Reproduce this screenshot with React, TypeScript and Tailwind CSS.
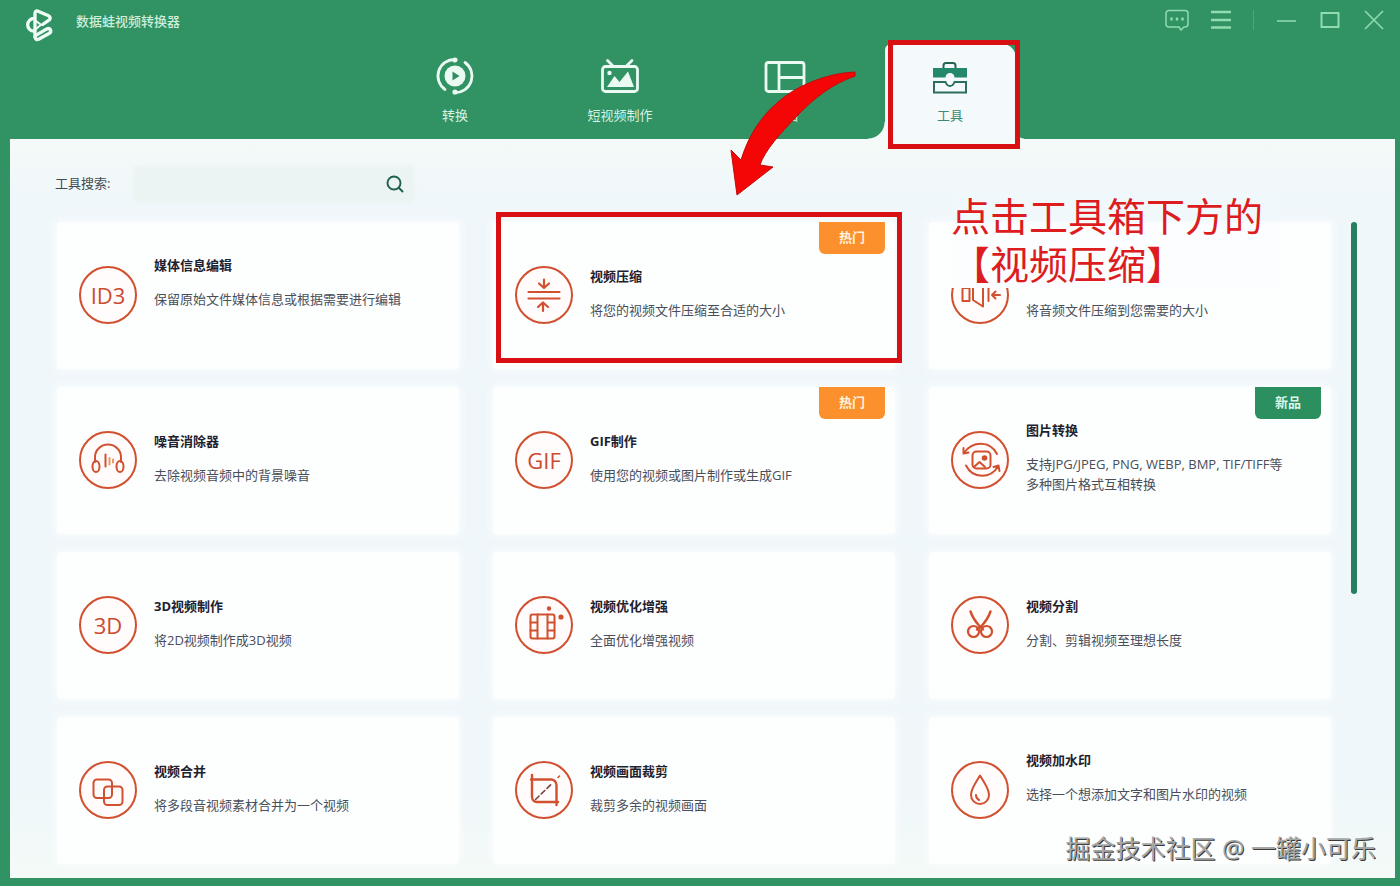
import type { ReactNode } from "react";

type Badge = "hot" | "new";

interface Tool {
  title: string;
  desc: string;
  icon: ReactNode;
  badge?: Badge;
  tall?: boolean;
  marked?: boolean;
  note?: boolean;
}

function Ring({ children }: { children: ReactNode }) {
  return (
    <svg
      viewBox="0 0 58 58"
      className="size-[58px] shrink-0"
      fill="none"
      stroke="#d1502f"
      strokeWidth="2"
      strokeLinecap="round"
      strokeLinejoin="round"
      aria-hidden="true"
    >
      <circle cx="29" cy="29" r="28" fill="#fffcfb" />
      {children}
    </svg>
  );
}

function RingText({ children }: { children: string }) {
  return (
    <span className="flex size-[58px] shrink-0 items-center justify-center rounded-full border-2 border-[#d1502f] bg-[#fffcfb] text-[22px] leading-7 font-medium text-[#cb4a30]">
      {children}
    </span>
  );
}

const tools: Tool[] = [
  {
    title: "媒体信息编辑",
    desc: "保留原始文件媒体信息或根据需要进行编辑",
    tall: true,
    icon: <RingText>ID3</RingText>,
  },
  {
    title: "视频压缩",
    desc: "将您的视频文件压缩至合适的大小",
    badge: "hot",
    marked: true,
    icon: (
      <Ring>
        <path d="M13.500 26h31M13.500 32.500h31" strokeWidth="2.200" />
        <path d="M29 13.500v8M24 17.500l5 4.500 5-4.500M28 45v-8M23 41l5-4.500 5 4.500" strokeWidth="2.200" />
      </Ring>
    ),
  },
  {
    title: "",
    desc: "将音频文件压缩到您需要的大小",
    note: true,
    icon: (
      <Ring>
        <path d="M11.500 22h7v13h-7zM22 22v12l10 6.500V19M37.500 20v15" />
        <path d="M49 29h-8M44.500 25.500L41 29l3.500 3.500" />
      </Ring>
    ),
  },
  {
    title: "噪音消除器",
    desc: "去除视频音频中的背景噪音",
    icon: (
      <Ring>
        <path d="M16 31v-5a13 12.500 0 0 1 26 0v5" />
        <ellipse cx="17" cy="35.500" rx="3.500" ry="5.500" />
        <ellipse cx="41" cy="35.500" rx="3.500" ry="5.500" />
        <path d="M26.500 23.500v12" />
        <path d="M30.500 27v6.500M34 28.500v3" stroke="#eb9a66" />
      </Ring>
    ),
  },
  {
    title: "GIF制作",
    desc: "使用您的视频或图片制作或生成GIF",
    badge: "hot",
    icon: <RingText>GIF</RingText>,
  },
  {
    title: "图片转换",
    desc: "支持JPG/JPEG, PNG, WEBP, BMP, TIF/TIFF等多种图片格式互相转换",
    badge: "new",
    tall: true,
    icon: (
      <Ring>
        <rect x="21.500" y="20.500" width="18" height="17" rx="4" />
        <circle cx="33.500" cy="27" r="1.800" fill="#d1502f" />
        <path d="M23.500 35.500l5-4.500 5.500 5" />
        <path d="M12.500 17v5.500l5-1M13 22c8-12 26-13 33 1" />
        <path d="M48.500 40l-1-5.500-5 1.500M47 35.500c-7 12-25 13-32-1" />
      </Ring>
    ),
  },
  {
    title: "3D视频制作",
    desc: "将2D视频制作成3D视频",
    icon: <RingText>3D</RingText>,
  },
  {
    title: "视频优化增强",
    desc: "全面优化增强视频",
    icon: (
      <Ring>
        <rect x="15.500" y="18.500" width="24" height="24" rx="2" />
        <path d="M22.500 18.500v24M32.500 18.500v24M15.500 26.500h7M15.500 34.500h7M32.500 26.500h7M32.500 34.500h7" />
        <circle cx="34" cy="12.500" r="1.200" fill="#d1502f" />
        <circle cx="46" cy="21" r="1.600" fill="#d1502f" />
      </Ring>
    ),
  },
  {
    title: "视频分割",
    desc: "分割、剪辑视频至理想长度",
    icon: (
      <Ring>
        <path d="M19.500 15.500c2 6 5 10 8.500 14l4 4M39.500 15.500c-2 6-5 10-8.500 14l-5 4" strokeWidth="2.400" />
        <circle cx="22.500" cy="35.500" r="5.500" strokeWidth="2.200" />
        <circle cx="35.500" cy="35.500" r="5.500" strokeWidth="2.200" />
      </Ring>
    ),
  },
  {
    title: "视频合并",
    desc: "将多段音视频素材合并为一个视频",
    icon: (
      <Ring>
        <rect x="14.500" y="18.500" width="18.500" height="18.500" rx="3.500" />
        <rect x="25" y="25.500" width="18.500" height="18.500" rx="3.500" />
      </Ring>
    ),
  },
  {
    title: "视频画面裁剪",
    desc: "裁剪多余的视频画面",
    icon: (
      <Ring>
        <path d="M17 14v22a5 5 0 0 0 5 5h21M16 18.500h20a5.500 5.500 0 0 1 5.500 5.500v20" strokeWidth="2.400" />
        <path d="M20.500 38.500L36 23.500" stroke="#7d4140" strokeWidth="1.600" strokeDasharray="5 3" />
        <path d="M43 16.500l1.500-1.500" strokeWidth="1.600" />
      </Ring>
    ),
  },
  {
    title: "视频加水印",
    desc: "选择一个想添加文字和图片水印的视频",
    tall: true,
    icon: (
      <Ring>
        <path d="M29 14.500c-4 7-9 13-9 19.500a9 9 0 0 0 18 0c0-6.500-5-12.500-9-19.500z" />
        <path d="M25 34c0 2.500 1 4 3 5" />
      </Ring>
    ),
  },
];

function ToolCard({ tool }: { tool: Tool }) {
  return (
    <li className="relative">
      <button
        type="button"
        className="flex h-[147px] w-full items-center gap-[17px] rounded-sm bg-[#fdfefe] px-[22px] pb-[2px] text-left shadow-[0_0_6px_2px_#f9fcfd]"
      >
        {tool.icon}
        <span className="flex flex-1 flex-col gap-[14px] pr-4 pb-1 text-[13px] leading-5">
          <span className="block h-5 font-bold text-[#1e2230]">{tool.title}</span>
          <span className={tool.tall ? "block min-h-[42px] text-[#494e5a]" : "block text-[#494e5a]"}>{tool.desc}</span>
        </span>
      </button>
      {tool.badge === "hot" && (
        <span className="absolute top-0 right-[10px] flex h-8 w-[66px] items-center justify-center rounded-b-md bg-[#fb902c] text-[13px] font-bold text-[#fff3dc]">
          热门
        </span>
      )}
      {tool.badge === "new" && (
        <span className="absolute top-0 right-[10px] flex h-8 w-[66px] items-center justify-center rounded-b-md bg-[#2b8f60] text-[13px] font-bold text-[#dcf5e8]">
          新品
        </span>
      )}
      {tool.marked && (
        <span className="pointer-events-none absolute -top-[10px] -right-[7px] bottom-[6px] left-[3px] border-[5px] border-[#d81014]" />
      )}
      {tool.note && (
        <p className="absolute -top-[30px] left-[22px] w-[330px] bg-[linear-gradient(#f1f8fb_28px,#fbfdfe_32px)] text-[39px] leading-[48px] text-[#dc1c1e]">
          点击工具箱下方的
          <br />
          【视频压缩】
        </p>
      )}
    </li>
  );
}

function Logo() {
  return (
    <svg viewBox="70 24 96 104" className="h-[35px] w-8" fill="none" stroke="#eefcf5" strokeWidth="10" strokeLinejoin="round" strokeLinecap="round" aria-hidden="true">
      <path d="M106 93a19 19 0 1 1 0-38" />
      <path d="M109 110V38q1-8 9-5l32 14q8 5 2 12l-20 14" />
      <path d="M109 110q1 11 11 7l31-17q8-5 4-12-4-6-12-1l-30 18" />
      <path d="M109 60l18 14-16 13" strokeWidth="6" />
    </svg>
  );
}

function Tab({ label, children }: { label: string; children: ReactNode }) {
  return (
    <button type="button" className="flex h-[95px] w-[165px] flex-col items-center pt-[11px] text-[13px] text-[#d9f3e5]">
      <span className="flex h-[42px] items-center">{children}</span>
      <span className="mt-2 leading-5">{label}</span>
    </button>
  );
}

export default function App() {
  return (
    <div className="relative flex min-h-screen flex-col bg-[#319263] pr-[5px] pb-2 pl-[10px] font-['Open_Sans','Noto_Sans_CJK_SC',sans-serif]">
      <header>
        <div className="flex h-11 items-start justify-between pr-[9px] pl-3">
          <div className="flex items-center gap-[22px] pt-2 text-[13px] font-medium text-[#cdeedb]">
            <Logo />
            <h1 className="pb-2">数据蛙视频转换器</h1>
          </div>
          <div className="flex items-center gap-5 pt-2 text-[#8edcb0]">
            <button type="button" aria-label="反馈">
              <svg viewBox="0 0 24 24" className="size-6" fill="none" stroke="currentColor" strokeWidth="1.500">
                <path d="M4 2.500h16a3 3 0 0 1 3 3V16a3 3 0 0 1-3 3h-1l-3 3-2-3H4a3 3 0 0 1-3-3V5.500a3 3 0 0 1 3-3z" />
                <path d="M6.500 9.500v3M12 9.500v3M17.500 9.500v3" strokeWidth="2.400" />
              </svg>
            </button>
            <button type="button" aria-label="菜单">
              <svg viewBox="0 0 24 24" className="size-6" stroke="currentColor" strokeWidth="2.400">
                <path d="M2 4h20M2 12h20M2 19.500h20" />
              </svg>
            </button>
            <span className="h-5 w-px bg-[#4aa679]" />
            <button type="button" aria-label="最小化">
              <svg viewBox="0 0 24 24" className="size-6" stroke="currentColor" strokeWidth="1.500">
                <path d="M3 13h19" />
              </svg>
            </button>
            <button type="button" aria-label="最大化">
              <svg viewBox="0 0 24 24" className="size-6" fill="none" stroke="currentColor" strokeWidth="2">
                <rect x="3.500" y="5" width="17" height="14" />
              </svg>
            </button>
            <button type="button" aria-label="关闭">
              <svg viewBox="0 0 24 24" className="size-6" stroke="currentColor" strokeWidth="1.600">
                <path d="M3 3l18 18M21 3L3 21" />
              </svg>
            </button>
          </div>
        </div>
        <nav className="flex justify-center">
          <Tab label="转换">
            <svg viewBox="0 0 40 40" className="size-10" fill="none" stroke="#eafaf2" strokeWidth="2.800" strokeLinecap="round" aria-hidden="true">
              <circle cx="20" cy="20" r="10.500" fill="#eafaf2" stroke="none" />
              <path d="M17.500 15.500v9l7-4.500z" fill="#2d8d60" stroke="none" />
              <path d="M10 33.500A16.500 16.500 0 0 1 20 3.500M30 6.500A16.500 16.500 0 0 1 20 36.500" />
              <circle cx="20" cy="4" r="1.200" fill="#eafaf2" />
              <circle cx="20" cy="36" r="1.200" fill="#eafaf2" />
            </svg>
          </Tab>
          <Tab label="短视频制作">
            <svg viewBox="0 0 40 40" className="size-10" fill="none" stroke="#eafaf2" strokeWidth="2.800" strokeLinecap="round" strokeLinejoin="round" aria-hidden="true">
              <rect x="2.500" y="10.500" width="35" height="25" rx="3" />
              <path d="M7.500 4.500l5 5M32 4.500l-5 5" />
              <circle cx="9.500" cy="17" r="2.200" fill="#eafaf2" stroke="none" />
              <path d="M7 31l7.500-11 5 6L28 15.500 34 31z" fill="#eafaf2" stroke="none" />
            </svg>
          </Tab>
          <div className="relative">
            <Tab label="拼图">
              <svg viewBox="0 0 42 40" className="h-10 w-[42px]" fill="none" stroke="#eafaf2" strokeWidth="2.800" strokeLinejoin="round" aria-hidden="true">
                <rect x="2" y="6.500" width="38" height="29" rx="2.500" />
                <path d="M15 6.500v29M15 21.500h25" />
              </svg>
            </Tab>
            <svg viewBox="730 70 128 128" className="pointer-events-none absolute top-[26px] left-[27px] z-10 size-32" aria-hidden="true">
              <path
                d="M855 72C832 73 810 81 793 91C768 107 751 128 741 160L731 150L737 195L773 167L760 165C765 150 780 134 796 117C814 98 832 84 855 76Z"
                fill="#f40606"
                stroke="#c40a0a"
                strokeWidth="1"
                strokeLinejoin="round"
              />
            </svg>
          </div>
          <div className="relative w-[165px] px-[17px]">
            <button
              type="button"
              aria-current="page"
              className="flex h-[95px] w-full flex-col items-center rounded-tl-md rounded-tr-[14px] bg-[#f4fafc] pt-[11px] text-[13px] text-[#3d8a70]"
            >
              <svg viewBox="0 0 40 42" className="h-[42px] w-10" aria-hidden="true">
                <path d="M13.500 13.500v-3a2.500 2.500 0 0 1 2.500-2.500h7a2.500 2.500 0 0 1 2.500 2.500v3" fill="none" stroke="#23654f" strokeWidth="2" />
                <path d="M3 13h34v9.500H24.500a4.500 4.500 0 0 0-9 0H3z" fill="#23896a" />
                <path d="M4 27h11.500q1.500 4 4.500 4t4.500-4H36v10.500H4z" fill="none" stroke="#2b6f5c" strokeWidth="2" />
              </svg>
              <span className="mt-2 leading-5">工具</span>
            </button>
            <span className="absolute bottom-0 left-0 size-[17px] bg-[radial-gradient(circle_at_0_0,#319263_16px,#f3f9f9_17px)]" />
            <span className="absolute right-[9px] bottom-0 size-2 bg-[radial-gradient(circle_at_100%_0,#319263_7px,#f3f9f9_8px)]" />
            <span className="pointer-events-none absolute -top-1 -bottom-[10px] left-[20px] z-10 w-[132px] border-[5px] border-[#d81014]" />
          </div>
        </nav>
      </header>
      <main className="flex-1 bg-[linear-gradient(#f4faf7,#f0f7fb_60px,#f0f7fa_650px,#f3faf7)] pt-7 pr-[38px] pb-[14px] pl-[47px]">
        <div className="mb-[21px] flex h-[34px] items-center gap-6 text-[13px] text-[#444b50]">
          <label htmlFor="tool-search" className="-ml-[2px] w-14">
            工具搜索:
          </label>
          <div className="flex h-full w-[278px] items-center rounded bg-[#ecf4f3] pr-[9px] shadow-[0_0_4px_2px_#ecf4f3]">
            <input id="tool-search" type="text" className="h-full min-w-0 flex-1 bg-transparent px-2 outline-none" />
            <button type="button" aria-label="搜索">
              <svg viewBox="0 0 20 20" className="size-5" fill="none" stroke="#1f5f50" strokeWidth="1.900" strokeLinecap="round">
                <circle cx="10" cy="9" r="6.500" />
                <path d="M15 14l3.500 3.500" />
              </svg>
            </button>
          </div>
        </div>
        <div className="flex gap-5">
          <ul className="grid flex-1 grid-cols-3 gap-x-[34px] gap-y-[18px]">
            {tools.map((tool) => (
              <ToolCard key={tool.desc} tool={tool} />
            ))}
          </ul>
          <div className="w-[6px] shrink-0">
            <div className="h-[372px] rounded-full bg-[#268060]" />
          </div>
        </div>
      </main>
      <p className="absolute right-6 bottom-[20px] text-[25px] leading-9 text-[#a6a8a8] [text-shadow:1px_1px_0_#3a3a3a]">
        掘金技术社区 @ 一罐小可乐
      </p>
    </div>
  );
}
